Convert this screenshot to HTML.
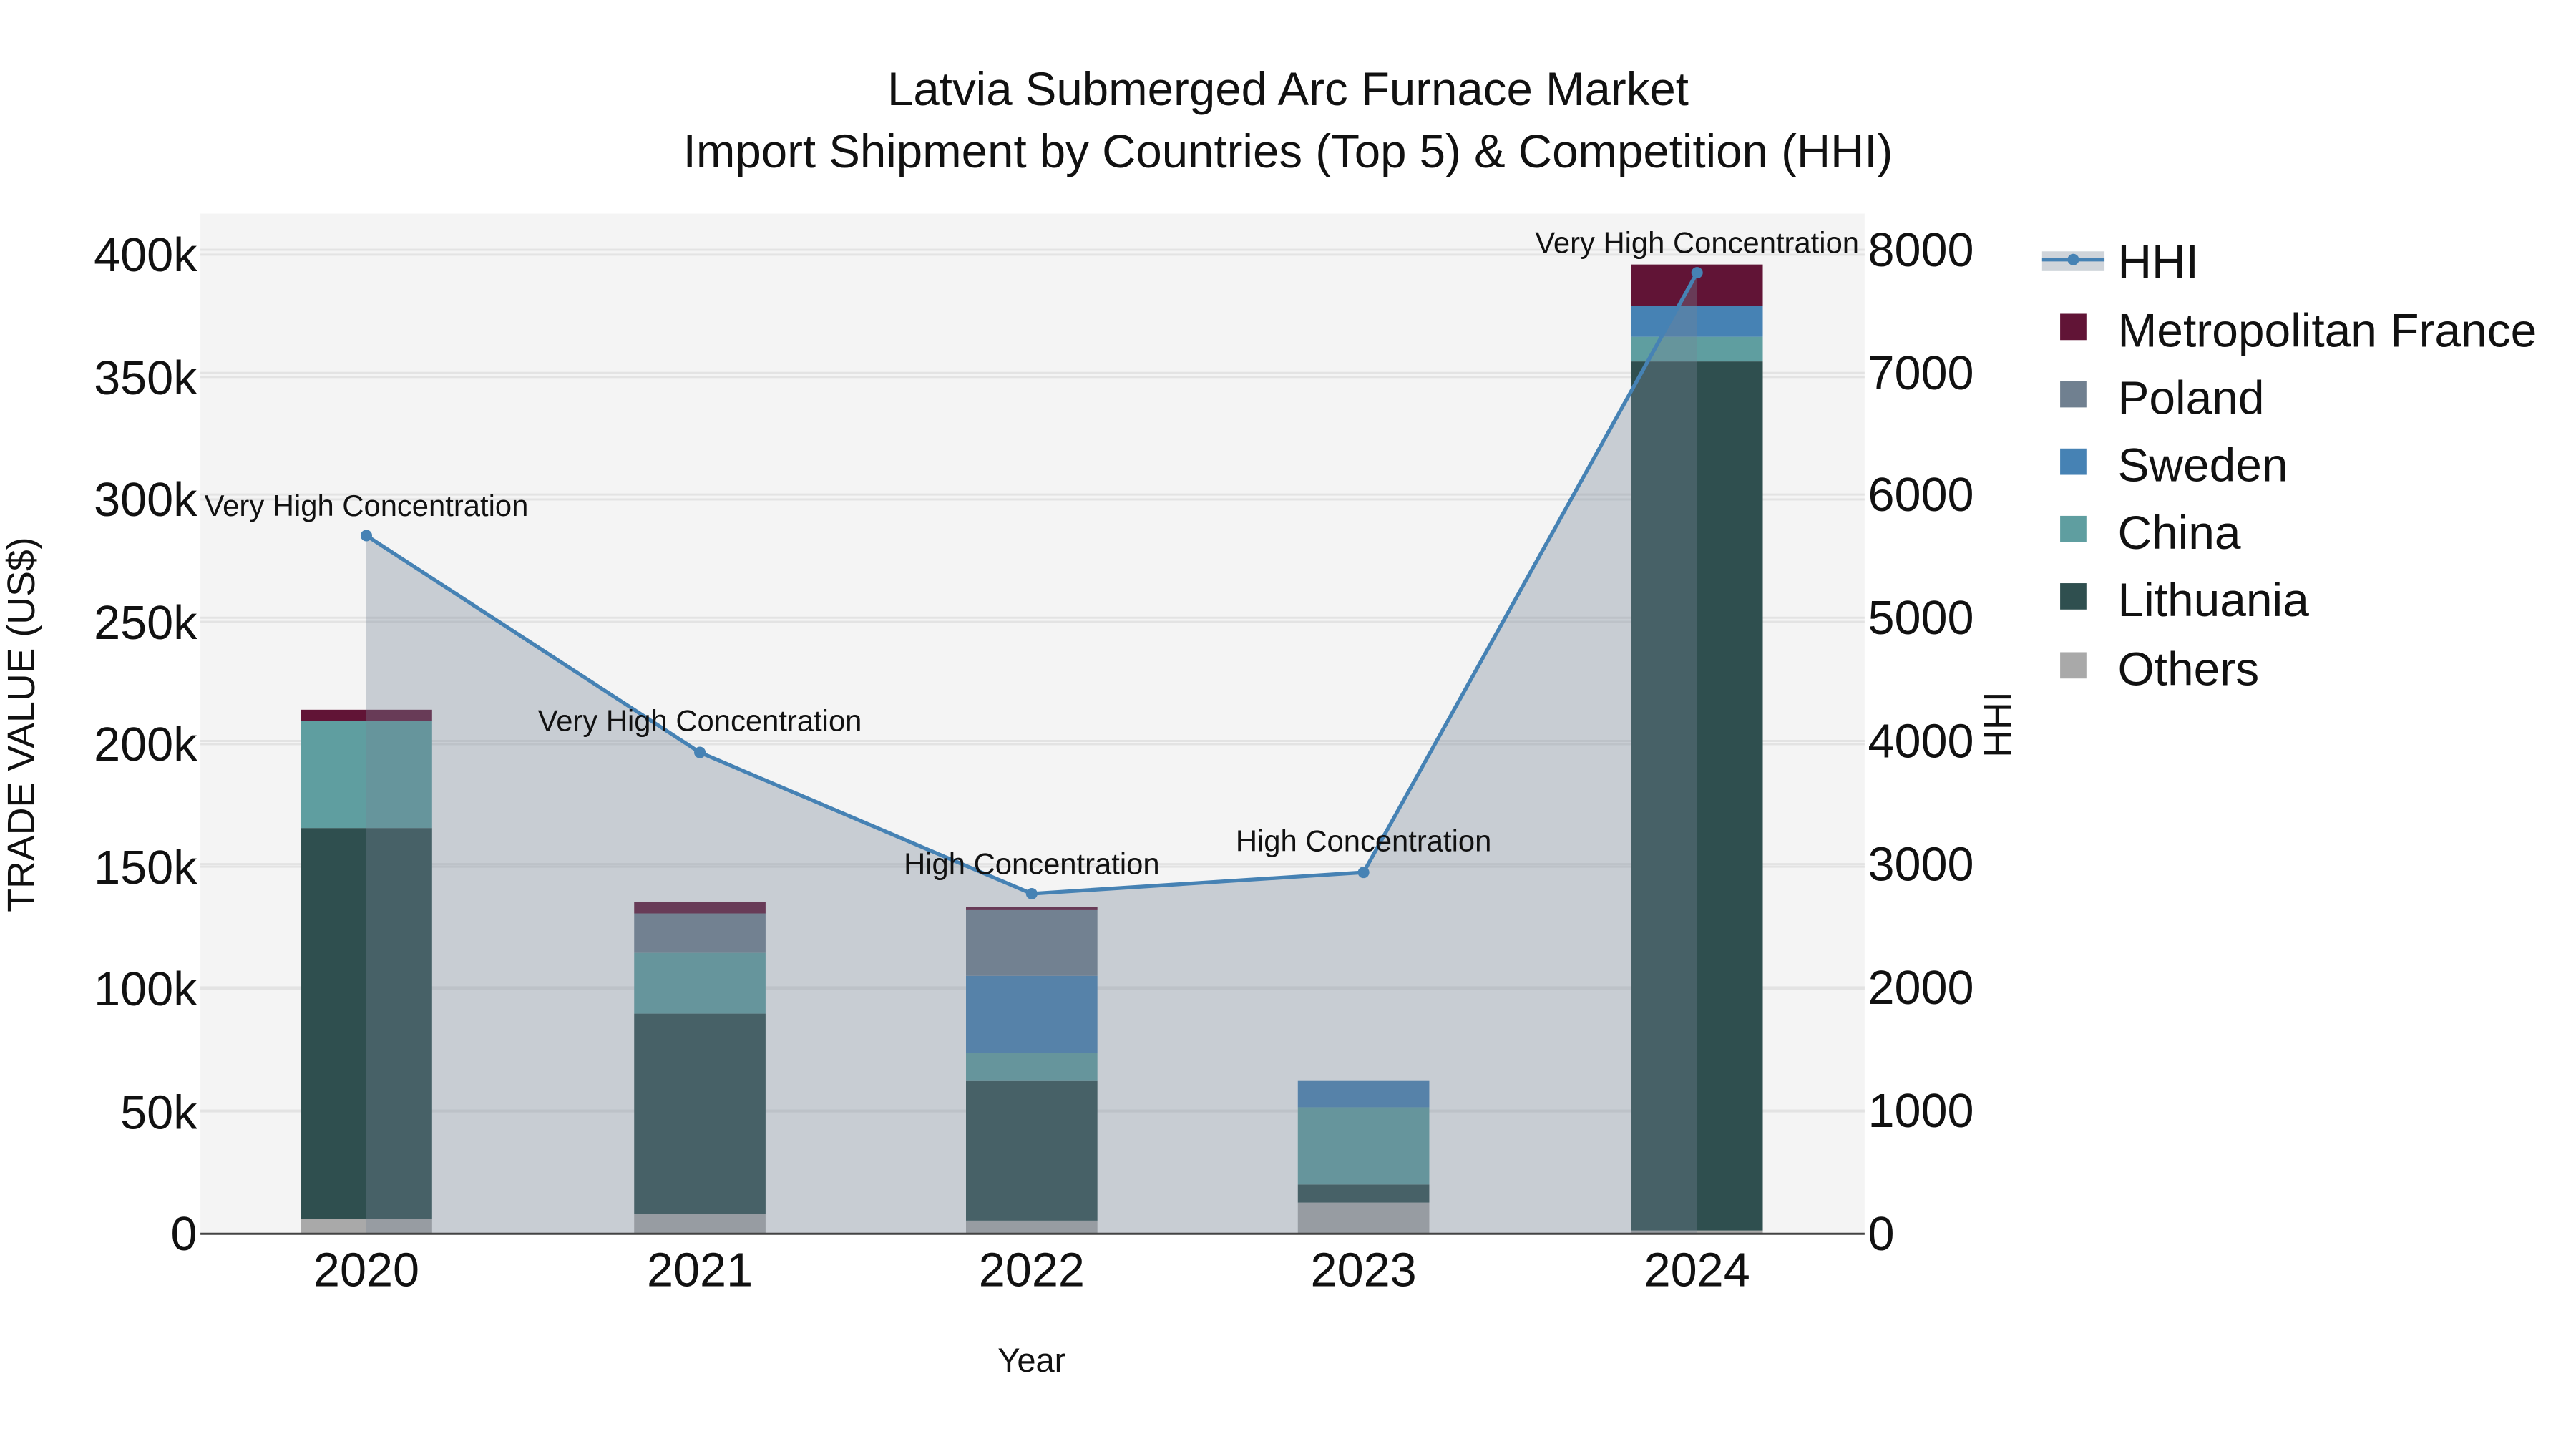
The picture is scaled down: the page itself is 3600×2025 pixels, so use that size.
<!DOCTYPE html>
<html><head><meta charset="utf-8">
<style>
html,body{margin:0;padding:0;background:#fff;}
svg{display:block;}
text{font-family:"Liberation Sans",Arial,sans-serif;}
</style></head>
<body>
<svg width="3600" height="2025" viewBox="0 0 1568 882" xmlns="http://www.w3.org/2000/svg">
<rect width="1568" height="882" fill="#fff"/>
<rect x="122" y="130" width="1013" height="621" fill="#f4f4f4"/>
<g stroke="#e3e3e3" stroke-width="1.3">
<line x1="122" x2="1135" y1="676.5" y2="676.5"/>
<line x1="122" x2="1135" y1="602" y2="602"/>
<line x1="122" x2="1135" y1="527.5" y2="527.5"/>
<line x1="122" x2="1135" y1="453" y2="453"/>
<line x1="122" x2="1135" y1="378.5" y2="378.5"/>
<line x1="122" x2="1135" y1="304" y2="304"/>
<line x1="122" x2="1135" y1="229.5" y2="229.5"/>
<line x1="122" x2="1135" y1="155" y2="155"/>
<line x1="122" x2="1135" y1="676" y2="676"/>
<line x1="122" x2="1135" y1="601" y2="601"/>
<line x1="122" x2="1135" y1="526" y2="526"/>
<line x1="122" x2="1135" y1="451" y2="451"/>
<line x1="122" x2="1135" y1="376" y2="376"/>
<line x1="122" x2="1135" y1="301" y2="301"/>
<line x1="122" x2="1135" y1="227" y2="227"/>
<line x1="122" x2="1135" y1="152" y2="152"/>
</g>
<g>
<rect x="183" y="742" width="80" height="9" fill="#a9a9a9"/>
<rect x="183" y="504" width="80" height="238" fill="#2f4f4f"/>
<rect x="183" y="439" width="80" height="65" fill="#5f9ea0"/>
<rect x="183" y="432" width="80" height="7" fill="#611436"/>
<rect x="386" y="739" width="80" height="12" fill="#a9a9a9"/>
<rect x="386" y="617" width="80" height="122" fill="#2f4f4f"/>
<rect x="386" y="580" width="80" height="37" fill="#5f9ea0"/>
<rect x="386" y="556" width="80" height="24" fill="#708090"/>
<rect x="386" y="549" width="80" height="7" fill="#611436"/>
<rect x="588" y="743" width="80" height="8" fill="#a9a9a9"/>
<rect x="588" y="658" width="80" height="85" fill="#2f4f4f"/>
<rect x="588" y="641" width="80" height="17" fill="#5f9ea0"/>
<rect x="588" y="594" width="80" height="47" fill="#4682b4"/>
<rect x="588" y="554" width="80" height="40" fill="#708090"/>
<rect x="588" y="552" width="80" height="2" fill="#611436"/>
<rect x="790" y="732" width="80" height="19" fill="#a9a9a9"/>
<rect x="790" y="721" width="80" height="11" fill="#2f4f4f"/>
<rect x="790" y="674" width="80" height="47" fill="#5f9ea0"/>
<rect x="790" y="658" width="80" height="16" fill="#4682b4"/>
<rect x="993" y="749" width="80" height="2" fill="#a9a9a9"/>
<rect x="993" y="220" width="80" height="529" fill="#2f4f4f"/>
<rect x="993" y="205" width="80" height="15" fill="#5f9ea0"/>
<rect x="993" y="186" width="80" height="19" fill="#4682b4"/>
<rect x="993" y="161" width="80" height="25" fill="#611436"/>
</g>
<polygon points="223,751 223,326 426,458 628,544 830,531 1033,166 1033,751" fill="rgba(118,132,150,0.35)"/>
<polyline points="223,326 426,458 628,544 830,531 1033,166" fill="none" stroke="#4682b4" stroke-width="2.3"/>
<g fill="#4682b4">
<circle cx="223" cy="326" r="3.5"/><circle cx="426" cy="458" r="3.5"/><circle cx="628" cy="544" r="3.5"/><circle cx="830" cy="531" r="3.5"/><circle cx="1033" cy="166" r="3.5"/>
</g>
<line x1="122" x2="1135" y1="751" y2="751" stroke="#444" stroke-width="1.3"/>
<g font-size="18.2" fill="#111" text-anchor="middle">
<text x="223" y="314">Very High Concentration</text>
<text x="426" y="445">Very High Concentration</text>
<text x="628" y="532">High Concentration</text>
<text x="830" y="518">High Concentration</text>
<text x="1033" y="154">Very High Concentration</text>
</g>
<g font-size="29" fill="#111" text-anchor="end">
<text x="120" y="761">0</text>
<text x="120" y="687">50k</text>
<text x="120" y="612">100k</text>
<text x="120" y="538">150k</text>
<text x="120" y="463">200k</text>
<text x="120" y="389">250k</text>
<text x="120" y="314">300k</text>
<text x="120" y="240">350k</text>
<text x="120" y="165">400k</text>
</g>
<g font-size="29" fill="#111" text-anchor="start">
<text x="1137" y="761">0</text>
<text x="1137" y="686">1000</text>
<text x="1137" y="611">2000</text>
<text x="1137" y="536">3000</text>
<text x="1137" y="461">4000</text>
<text x="1137" y="386">5000</text>
<text x="1137" y="311">6000</text>
<text x="1137" y="237">7000</text>
<text x="1137" y="162">8000</text>
</g>
<g font-size="29" fill="#111" text-anchor="middle">
<text x="223" y="783">2020</text>
<text x="426" y="783">2021</text>
<text x="628" y="783">2022</text>
<text x="830" y="783">2023</text>
<text x="1033" y="783">2024</text>
</g>
<text x="628" y="835" font-size="20.5" fill="#111" text-anchor="middle">Year</text>
<text transform="translate(21,441) rotate(-90)" font-size="23.4" fill="#111" text-anchor="middle">TRADE VALUE (US$)</text>
<text transform="translate(1224,441) rotate(-90)" font-size="23.4" fill="#111" text-anchor="middle">HHI</text>
<text x="784" y="64" font-size="28.5" fill="#111" text-anchor="middle">Latvia Submerged Arc Furnace Market</text>
<text x="784" y="102" font-size="28.5" fill="#111" text-anchor="middle">Import Shipment by Countries (Top 5) &amp; Competition (HHI)</text>
<rect x="1243" y="153" width="38" height="12" fill="rgba(118,132,150,0.35)"/>
<line x1="1243" x2="1281" y1="158" y2="158" stroke="#4682b4" stroke-width="2.3"/>
<circle cx="1262" cy="158" r="3.5" fill="#4682b4"/>
<rect x="1254" y="191" width="16" height="16" fill="#611436"/>
<rect x="1254" y="232" width="16" height="16" fill="#708090"/>
<rect x="1254" y="273" width="16" height="16" fill="#4682b4"/>
<rect x="1254" y="314" width="16" height="16" fill="#5f9ea0"/>
<rect x="1254" y="355" width="16" height="16" fill="#2f4f4f"/>
<rect x="1254" y="397" width="16" height="16" fill="#a9a9a9"/>
<g font-size="28.7" fill="#111">
<text x="1289" y="169">HHI</text>
<text x="1289" y="211">Metropolitan France</text>
<text x="1289" y="252">Poland</text>
<text x="1289" y="293">Sweden</text>
<text x="1289" y="334">China</text>
<text x="1289" y="375">Lithuania</text>
<text x="1289" y="417">Others</text>
</g>
</svg>
</body></html>
